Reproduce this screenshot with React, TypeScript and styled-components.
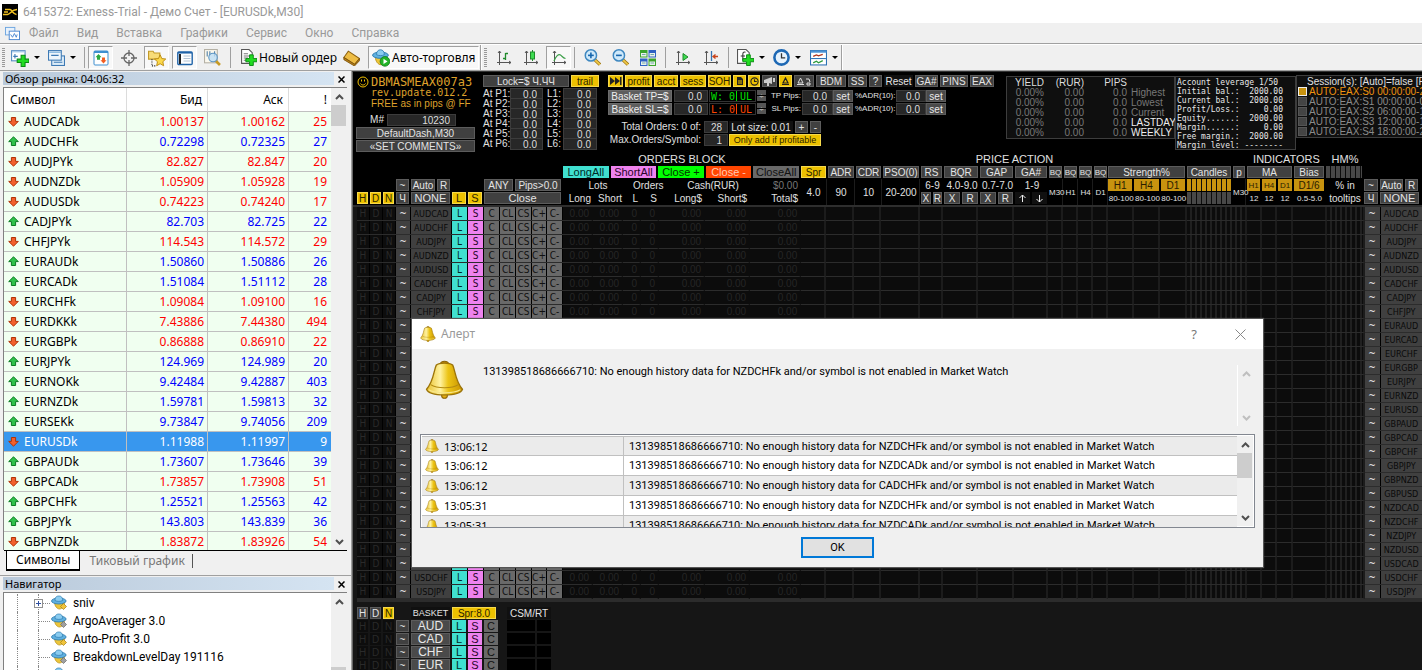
import React from "react";
import styled, { createGlobalStyle, css } from "styled-components";

const SEGOE = `"Noto Sans", "Open Sans", sans-serif`;
const COMPACT = `Roboto, "Noto Sans", sans-serif`;
const TAHOMA = `"Noto Sans", "DejaVu Sans", sans-serif`;
const ARIAL = `"Liberation Sans", Arial, sans-serif`;
const MONO = `"DejaVu Sans Mono", "Liberation Mono", monospace`;

const Global = createGlobalStyle`
  *, *::before, *::after { box-sizing: border-box; }
  body { margin: 0; background: #f0f0f0; overflow: hidden; }
  button, input { font: inherit; color: inherit; margin: 0; padding: 0; border: 0; border-radius: 0; background: none; min-width: 0; }
  table { border-collapse: separate; border-spacing: 0; table-layout: fixed; }
  td, th { padding: 0; font-weight: 400; }
`;

/* ---------- window frame ---------- */
const Window = styled.div`
  display: flex; flex-direction: column; height: 100vh; overflow: hidden;
  font: 12px/16px ${SEGOE}; color: #000; background: #f0f0f0;
`;
const TitleBar = styled.header`
  display: flex; align-items: center; gap: 5px; flex: none; height: 23px; padding-left: 2px;
  background: #fff; color: #999; font-family: ${COMPACT};
`;
const MenuBar = styled.nav`
  display: flex; align-items: center; gap: 18px; flex: none; height: 21px; padding-left: 5px;
  border-bottom: 1px solid #a0a0a0; color: #999; font-family: ${COMPACT};
`;
const MenuItem = styled.button`line-height: 16px; &:first-of-type { margin-left: -9px; }`;
const ToolBar = styled.div`
  display: flex; align-items: center; flex: none; height: 27px;
  border-top: 1px solid #fff; border-bottom: 1px solid #a0a0a0;
`;
const Grip = styled.i<{ $w: number }>`
  flex: none; width: ${p => p.$w}px; height: 20px;
  &::before { content: ""; display: block; width: 3px; height: 20px; margin-left: 2px;
    background: repeating-linear-gradient(#999 0 1px, #f0f0f0 1px 2px); }
`;
const Sep = styled.i<{ $w: number }>`
  flex: none; display: flex; justify-content: center; width: ${p => p.$w}px; height: 21px;
  &::before { content: ""; width: 1px; background: #a0a0a0; }
`;
const ToolEnd = styled.i`flex: none; width: 2px; height: 25px; background: #a0a0a0; border-right: 1px solid #fff;`;
const Tool = styled.button<{ $w: number; $on?: boolean; $left?: number }>`
  display: flex; align-items: center; gap: 2px; flex: none; width: ${p => p.$w}px; height: 23px;
  justify-content: ${p => (p.$left ? "flex-start" : "center")};
  padding-left: ${p => p.$left ?? 0}px; white-space: nowrap; font-size: 12px;
  ${p => p.$on && css`background: #f8f8f8; border: 1px solid #a0a0a0; border-right-color: #fff; border-bottom-color: #fff;`}
`;
const Caret = styled.i`margin-left: 3px; border: 3px solid transparent; border-top-color: #000; border-bottom: 0;`;
const Gap = styled.i<{ $w: number }>`flex: none; width: ${p => p.$w}px;`;

const Main = styled.div`display: flex; flex: 1; min-height: 0;`;

/* ---------- left docks ---------- */
const Side = styled.aside`
  display: flex; flex-direction: column; flex: none; width: 352px; border-right: 1px solid #a0a0a0;
`;
const Dock = styled.section<{ $grow?: boolean }>`
  display: flex; flex-direction: column; padding: 1px 4px 0 3px; min-height: 0;
  ${p => (p.$grow ? css`flex: 1;` : css`flex: none; height: 505px; border-bottom: 1px solid #a0a0a0;`)}
`;
const Caption = styled.div`
  display: flex; justify-content: space-between; flex: none; height: 15px; padding-left: 2px;
  font: 11px/13px ${TAHOMA};
  background: linear-gradient(90deg, #b9c9da, #d5e4f2) left top / 331px 13px no-repeat;
`;
const CaptionClose = styled.button`width: 11px; height: 14px; display: grid; place-items: center;`;
const ListBox = styled.div<{ $h?: number }>`
  display: flex; overflow: hidden; background: #fff; border: solid #808080; border-width: 1px 0 0 1px;
  ${p => (p.$h ? css`height: ${p.$h}px;` : css`flex: 1;`)}
`;
const Bar = styled.div`
  position: relative; display: flex; flex-direction: column; justify-content: space-between; align-items: center;
  flex: none; width: 16px; padding: 6px 0 5px; background: #f0f0f0;
`;
const Thumb = styled.i<{ $top: number; $h: number }>`
  position: absolute; left: 0; right: 1px; top: ${p => p.$top}px; height: ${p => p.$h}px; background: #cdcdcd;
`;
const Quotes = styled.table`
  width: 327px; flex: none; height: max-content; background: #fff;
  th { height: 24px; padding-right: 5px; text-align: right; border-right: 1px solid #dcdcdc; border-bottom: 1px solid #c0c0c0; }
  th:first-child { text-align: left; padding-left: 6px; }
  th:last-child, td:last-child { border-right: 0; padding-right: 4px; }
`;
const Quote = styled.tr<{ $c: string; $sel?: boolean }>`
  background: ${p => (p.$sel ? "#3897ee" : "#f0fff0")};
  td { height: 20px; line-height: 19px; color: ${p => (p.$sel ? "#fff" : p.$c)}; text-align: right; padding-right: 3px;
    border-right: 1px solid #c0c0c0; border-bottom: 1px solid #c0c0c0; }
  td:first-child { color: ${p => (p.$sel ? "#fff" : "#000")}; }
`;
const Sym = styled.span`display: flex; align-items: center; gap: 5px; padding-left: 4px; height: 19px;`;
const Tabs = styled.div`
  display: flex; flex: none; height: 22px; margin: 0 0 0 1px; padding-left: 2px; border-top: 1px solid #000; font-size: 12px;
`;
const Tab = styled.button<{ $on?: boolean }>`
  height: 20px; line-height: 16px; display: flex; align-items: center; padding: 0 9px;
  ${p => (p.$on ? css`background: #fff; border: 1px solid #000; border-top: 0; border-bottom-width: 2px;` : css`color: #777;`)}
  &:last-child::after { content: ""; height: 14px; margin-left: 7px; border-right: 1px solid #555; }
`;
const Tree = styled.ul`
  flex: 1; margin: 0; padding: 1px 0 0 13px; list-style: none; overflow: hidden; height: 110px; font-family: ${COMPACT};
`;
const Node = styled.li`
  display: flex; align-items: center; height: 18px; padding-left: 20px; border-left: 1px dotted #888;
`;
const NodeName = styled.span`padding-left: 6px;`;
const Branch = styled.i`
  display: flex; align-items: center; flex: none; width: 13px; height: 18px; border-left: 1px dotted #888;
  &::after { content: ""; width: 11px; border-top: 1px dotted #888; }
`;
const Plus = styled.button`
  position: relative; flex: none; width: 9px; height: 9px; margin: 0 -4px 0 -5px; border: 1px solid #919191; background: #fff;
  display: grid; place-items: center;
`;

/* ---------- chart dashboard ---------- */
const Chart = styled.main`
  position: relative; flex: 1; min-width: 0; overflow: hidden; background: #161616; border-left: 1px solid #666; border-top: 1px solid #333;
  font: 10px/11px ${ARIAL}; color: #e0e0e0;
`;
const Head = styled.div`background: #000; border-bottom: 2px solid #2e2e2e; width: max-content; min-width: 100%;`;
const TopRow = styled.div`display: flex; height: 81px; padding-left: 3px;`;
const Stack = styled.div<{ $w: number; $top?: number; $gap?: number }>`
  flex: none; width: ${p => p.$w}px; padding-top: ${p => p.$top ?? 0}px; display: flex; flex-direction: column; gap: ${p => p.$gap ?? 0}px;
`;
const Line = styled.div<{ $top?: number; $h?: number; $left?: number }>`
  display: flex; height: ${p => p.$h ?? 13}px; margin-top: ${p => p.$top ?? 0}px; padding-left: ${p => p.$left ?? 0}px; white-space: nowrap;
`;

const tones: Record<string, string> = {
  dark: "background:#404040;color:#e4e4e4;border-color:#5c5c5c;",
  mid: "background:#5e5e5e;color:#eee;border-color:#6c6c6c;",
  gold: "background:#edc100;color:#2c2400;border-color:#f6d94c;",
  ochre: "background:#c8930f;color:#2a1d00;border-color:#c8930f;",
  cyan: "background:#40e0d0;color:#002a26;border-color:#40e0d0;",
  pink: "background:#ee82ee;color:#2a042a;border-color:#ee82ee;",
  lime: "background:#00ff00;color:#003000;border-color:#00ff00;",
  red: "background:#ff4500;color:#ffc9b0;border-color:#ff4500;",
  gray: "background:#696969;color:#111;border-color:#696969;",
  plain: "background:#101010;color:#e4e4e4;border-color:#101010;",
  pair: "background:#404040;color:#0a0a0a;border-color:#404040;",
  off: "background:#0d0d0d;color:#2a2a2a;border-color:#0d0d0d;",
  big: "background:#4a4a4a;color:#e8e8e8;border-color:#5c5c5c;",
};
const Key = styled.button<{ $w?: number; $t?: string; $fs?: number }>`
  display: inline-flex; align-items: center; justify-content: center; white-space: nowrap;
  height: 12px; line-height: 11px; border: 1px solid; margin-right: 2px;
  ${p => (p.$w ? `flex: none; width: ${p.$w - 2}px;` : "flex: 1;")}
  ${p => tones[p.$t ?? "dark"]}
  ${p => p.$fs && `font-size: ${p.$fs}px;`}
`;
const Field = styled.input<{ $w: number }>`
  flex: none; width: ${p => p.$w}px; height: 12px; line-height: 10px; padding-right: 5px; text-align: right; color: #ddd;
  background: #272727; border: 1px solid #3c3c3c;
`;
const Small = styled.label<{ $w: number }>`
  flex: none; width: ${p => p.$w}px; height: 12px; font: 8px/12px ${ARIAL}; text-align: right; padding-right: 1px;
`;
const Lbl = styled.label<{ $w: number; $r?: boolean }>`
  flex: none; width: ${p => p.$w}px; line-height: 12px; ${p => p.$r && css`text-align: right; padding-right: 3px;`}
`;
const Brand = styled.div`color: #dea12c; display: grid; grid-template-columns: 14px 1fr; height: 43px; padding-left: 1px; white-space: nowrap;`;
const BrandName = styled.div`padding-top: 5px; font: 12px/11px ${MONO};`;
const BrandRev = styled.div`font: 10px/9px ${MONO};`;
const BrandFree = styled.div`font: 10px/14px ${ARIAL};`;
const Smiley = styled.span`padding-top: 4px;`;
const Counter = styled.div<{ $c: string }>`
  display: flex; flex: none; width: 47px; height: 12px; margin: 0 1px; padding: 0 3px 0 1px; justify-content: space-between;
  border: 1px solid #333; color: ${p => p.$c}; font: 10px/11px ${MONO};
  b { font-weight: 400; border-left: 1px solid ${p => p.$c}; padding-left: 3px; }
`;
const Spin = styled.button`
  width: 9px; height: 12px; margin-right: 3px; flex: none; background: repeating-linear-gradient(#555 0 5px, #000 5px 6px);
  display: flex; align-items: center; justify-content: center; font-size: 8px;
`;
const Panel = styled.div<{ $w: number; $h: number; $top: number }>`
  flex: none; width: ${p => p.$w}px; height: ${p => p.$h}px; margin-top: ${p => p.$top}px; background: #0f0f0f; border: 1px solid #3d3d3d;
`;
const Yield = styled.table`
  width: 167px; color: #777;
  td, th { height: 10px; line-height: 10px; text-align: right; }
  th { color: #ddd; height: 11px; } th:last-child, td:last-child { text-align: left; padding-left: 4px; }
`;
const Bright = styled.span`color: #eee;`;
const Account = styled.pre`margin: 0; padding: 1px 0 0 1px; font: 8px/9px ${MONO}; color: #e8e8e8;`;
const Session = styled.label<{ $on?: boolean }>`
  display: flex; gap: 2px; height: 10px; line-height: 10px; padding-left: 1px; white-space: nowrap; color: ${p => (p.$on ? "#f0940f" : "#8a8a8a")};
  input { appearance: none; width: 9px; height: 9px; margin: 0; background: ${p => (p.$on ? "#c8930f" : "#444")};
    border: 1px solid ${p => (p.$on ? "#eee" : "#555")}; }
`;
const BottomRow = styled.div`display: flex; align-items: flex-end; height: 52px; padding-left: 4px;`;
const Col = styled.div<{ $w: number }>`flex: none; width: ${p => p.$w}px; display: flex; flex-direction: column;`;
const Cap = styled.div`height: 13px; font-size: 11px; line-height: 13px; text-align: center; white-space: nowrap;`;
const Two = styled.div<{ $fs?: number }>`
  height: 26px; display: grid; place-items: center; margin-right: 1px; border-right: 1px solid #1c1c1c; ${p => p.$fs && `font-size: ${p.$fs}px;`}
`;
const Txt = styled.span<{ $w?: number; $a?: string; $s?: boolean; $dim?: boolean }>`
  ${p => (p.$w ? `flex: none; width: ${p.$w}px;` : "flex: 1;")} line-height: 13px; text-align: ${p => p.$a ?? "center"};
  ${p => p.$a === "right" && "padding-right: 3px;"} ${p => p.$s && css`font-size: 8px;`} ${p => p.$dim && "color: #777;"}
`;
const Stripes = styled.div<{ $c: string }>`
  flex: 1; height: 12px; margin-right: 2px; background: repeating-linear-gradient(90deg, ${p => p.$c} 0 4px, #0c0c0c 4px 5px);
`;

const Grid = styled.table`
  width: 1066px; margin-left: 4px; font: 10px/12px "DejaVu Sans Condensed", "DejaVu Sans", sans-serif; color: #262626;
  td { height: 14px; background: #0c0c0c; border-right: 2px solid #1c1c1c; border-bottom: 1px solid #2c2c2c; overflow: hidden; white-space: nowrap; text-align: right; padding-right: 2px; }
  td.key { padding: 0; border-right: 0; background: #000; }
  td.num { border-right-color: #0c0c0c; font: 10px/12px ${ARIAL}; }
  td.bars { background: repeating-linear-gradient(90deg, #0c0c0c 0 3px, #202020 3px 5px); }
`;
const Cell = styled.button<{ $t: string }>`
  display: flex; align-items: center; justify-content: center; width: calc(100% - 1px); height: 13px; line-height: 12px; overflow: hidden;
  ${p => tones[p.$t]} ${p => p.$t === "pair" && "font-size: 9px;"}
`;
const GridEnd = styled.div`height: 3px; background: #2c2c2c; margin-left: 4px; min-width: 100%;`;
const Basket = styled.div`padding: 5px 0 0 4px; display: flex; flex-direction: column;`;
const BRow = styled.div`display: flex; height: 13px; white-space: nowrap;`;
const Black = styled.i<{ $w: number }>`flex: none; width: ${p => p.$w - 2}px; height: 11px; margin-right: 2px; background: #000;`;

/* ---------- alert dialog ---------- */
const Dialog = styled.div`
  position: absolute; left: 59px; top: 247px; width: 851px; height: 248px; background: #f0f0f0; color: #000;
  display: flex; flex-direction: column; font: 11px/14px ${COMPACT}; box-shadow: 0 0 1px 1px #555;
`;
const DTitle = styled.div`
  display: flex; align-items: center; flex: none; height: 30px; padding-left: 8px; background: #fff; color: #999; font: 12px/16px ${SEGOE};
`;
const DName = styled.span`flex: 1; padding-left: 5px;`;
const DBtn = styled.button`width: 46px; height: 30px; display: grid; place-items: center; font-size: 13px; color: #777;`;
const DTop = styled.div`display: flex; flex: none; height: 85px; padding: 11px 8px 0 13px;`;
const Message = styled.p`flex: 1; margin: 0; padding: 5px 0 0 19px;`;
const DScroll = styled.div`
  display: flex; flex-direction: column; align-items: center; justify-content: space-between; width: 18px; height: 61px; margin-top: 5px; padding: 6px 0 5px; border-left: 1px solid #fff;
`;
const AlertList = styled.div`
  display: flex; flex: none; height: 94px; margin: 0 8px; padding: 1px; border: 1px solid #828790; background: #fff; overflow: hidden;
`;
const Alerts = styled.table`
  flex: 1; height: max-content; 
  td { height: 20px; line-height: 17px; border-bottom: 1px solid #c0c0c0; }
  tr:nth-child(odd) td { background: #ebebeb; }
  td:first-child { width: 202px; border-right: 1px solid #c0c0c0; }
  td:last-child { padding-left: 5px; }
  tr:first-child td { border-top: 1px solid #c0c0c0; }
`;
const Time = styled.span`display: flex; align-items: center; gap: 5px; padding-left: 3px; height: 18px; font-family: ${TAHOMA};`;
const Ok = styled.button`align-self: center; width: 73px; height: 21px; margin: 9px 0 0; background: #e1e1e1; border: 2px solid #0078d7;`;

/* ---------- drawings ---------- */
const Draw = styled.svg`flex: none;`;
const Svg = ({ s = 16, children, h, vb }: any) => (
  <Draw width={s} height={h ?? s} viewBox={vb ?? "0 0 16 16"} fill="none">{children}</Draw>
);
const Chev = ({ up, c = "#505050" }: { up?: boolean; c?: string }) => (
  <Svg s={9} h={6} vb="0 0 9 6"><path d={up ? "M1 5L4.500 1.500L8 5" : "M1 1L4.500 4.500L8 1"} stroke={c} strokeWidth="2" /></Svg>
);
const Arrow = ({ up }: { up?: boolean }) => (
  <Svg s={11} vb="0 0 11 11">
    {up
      ? <path d="M5.500 .8L10.300 5.600H7.600V9.500H3.400V5.600H.7z" fill="#2fc24a" stroke="#0b7a22" />
      : <path d="M5.500 10.200L10.300 5.400H7.600V1.500H3.400V5.400H.7z" fill="#f2602c" stroke="#b03205" />}
  </Svg>
);
const PlusG = () => <path d="M9 5.500h3.500v3.500h3.500v3h-3.500v3.500H9V12H5.500V9H9z" fill="#22dc22" stroke="#0a8a14" strokeWidth=".9" />;
const Axes = () => (
  <><path d="M3.500 1v14M1 12.500h14" stroke="#555" /><path d="M2 3l1.500-2L5 3M13 11l2 1.500-2 1.500" stroke="#555" /></>
);
const Hat = ({ gold = true }: { gold?: boolean }) => (
  <Svg>
    <path d="M3.500 7c0 4 2.500 7 5 7s5-3 5-7z" fill="#ecc53a" stroke="#b48c14" strokeWidth=".7" />
    <ellipse cx="7.800" cy="6" rx="7.300" ry="3" fill="#5fb0e0" stroke="#2a79ad" strokeWidth=".8" />
    <path d="M4 5.500C4 2 5.600 1 7.800 1s3.800 1 3.800 4.500c-2 1.200-5.600 1.200-7.600 0z" fill="#8accf0" stroke="#2a79ad" strokeWidth=".7" />
    <path d="M12.500 8.500l3 3-3 3-3-3z" fill={gold ? "#f0c43c" : "#a0a0a0"} stroke={gold ? "#a67c10" : "#686868"} strokeWidth=".7" />
  </Svg>
);
const Bell = ({ s }: { s: number }) => (
  <Svg s={s} vb="0 0 38 38">
    <defs>
      <linearGradient id="bell" x1="0" x2="1"><stop offset="0" stopColor="#e8c02c" /><stop offset=".38" stopColor="#fff2a0" /><stop offset=".6" stopColor="#ecc416" /><stop offset="1" stopColor="#c89200" /></linearGradient>
    </defs>
    <circle cx="19" cy="34.500" r="2.800" fill="#e3ad10" stroke="#8a6208" />
    <path d="M15 3.500c1-3 7-3 8 0z" fill="#b98508" stroke="#8a6208" />
    <path d="M11 5C14 2.500 24 2.500 27 5c2.500 5 2.500 16 9.500 23.500C35 32.500 28 34 19 34S3 32.500 1.500 28.500C8.500 21 8.500 10 11 5z" fill="url(#bell)" stroke="#9c7408" strokeWidth="1.300" />
    <path d="M5.500 24c6 4 21 4 27 0" stroke="#b48b10" />
    <path d="M3.500 29c7 4 24 4 31 0" stroke="#f8e68a" />
  </Svg>
);
const Lens = ({ plus }: { plus?: boolean }) => (
  <Svg s={17}>
    <path d="M10 10l5 4.700" stroke="#9a7410" strokeWidth="3.200" /><path d="M10 10l5 4.700" stroke="#f0c848" strokeWidth="1.800" />
    <circle cx="6.500" cy="6" r="5.300" fill="#cfe9fa" stroke="#3f88c0" strokeWidth="1.400" />
    <path d="M3.800 6h5.400" stroke="#1767ae" strokeWidth="1.500" />
    {plus && <path d="M6.500 3.300v5.400" stroke="#1767ae" strokeWidth="1.500" />}
  </Svg>
);

/* ---------- data ---------- */
const quotes: [string, string, string, number, boolean][] = [
  ["AUDCADk", "1.00137", "1.00162", 25, false], ["AUDCHFk", "0.72298", "0.72325", 27, true],
  ["AUDJPYk", "82.827", "82.847", 20, false], ["AUDNZDk", "1.05909", "1.05928", 19, false],
  ["AUDUSDk", "0.74223", "0.74240", 17, false], ["CADJPYk", "82.703", "82.725", 22, true],
  ["CHFJPYk", "114.543", "114.572", 29, false], ["EURAUDk", "1.50860", "1.50886", 26, true],
  ["EURCADk", "1.51084", "1.51112", 28, true], ["EURCHFk", "1.09084", "1.09100", 16, false],
  ["EURDKKk", "7.43886", "7.44380", 494, false], ["EURGBPk", "0.86888", "0.86910", 22, false],
  ["EURJPYk", "124.969", "124.989", 20, true], ["EURNOKk", "9.42484", "9.42887", 403, true],
  ["EURNZDk", "1.59781", "1.59813", 32, true], ["EURSEKk", "9.73847", "9.74056", 209, true],
  ["EURUSDk", "1.11988", "1.11997", 9, false], ["GBPAUDk", "1.73607", "1.73646", 39, true],
  ["GBPCADk", "1.73857", "1.73908", 51, false], ["GBPCHFk", "1.25521", "1.25563", 42, true],
  ["GBPJPYk", "143.803", "143.839", 36, true], ["GBPNZDk", "1.83872", "1.83926", 54, false],
];
const pairs = "AUDCAD AUDCHF AUDJPY AUDNZD AUDUSD CADCHF CADJPY CHFJPY EURAUD EURCAD EURCHF EURGBP EURJPY EURNZD EURUSD GBPAUD GBPCAD GBPCHF GBPJPY GBPNZD GBPUSD NZDCAD NZDCHF NZDJPY NZDUSD USDCAD USDCHF USDJPY".split(" ");
const cols = [13, 13, 13, 15, 41, 16, 16, 16, 16, 16, 15, 16, 30, 30, 18, 18, 46, 45, 51, 25, 28, 27, 39, 23, 35, 36, 34, 15, 15, 15, 15, 26, 26, 27, 60, 15, 15, 16, 33, 38, 16, 42];
const alerts = [["13:06:12", "NZDCHFk"], ["13:06:12", "NZDCADk"], ["13:06:12", "CADCHFk"], ["13:05:31", "NZDCHFk"], ["13:05:31", "NZDCADk"]];
const alertText = (s: string) => `131398518686666710: No enough history data for ${s} and/or symbol is not enabled in Market Watch`;
const account = `Account leverage 1/50
Initial bal.:  2000.00
Current bal.:  2000.00
Profit/Loss.:     0.00
Equity......:  2000.00
Margin......:     0.00
Free margin.:  2000.00
Margin level: --------`;

function TopTools() {
  return (
    <ToolBar role="toolbar">
      <Grip $w={8} />
      <Tool $w={34} $left={3} aria-label="New chart"><Svg s={18}><rect x=".5" y="1.500" width="12" height="9" fill="#fff" stroke="#5a8fc4" /><path d="M1 2.500h11" stroke="#9cc3e8" /><path d="M3.500 4.500v4M2 6.500h4" stroke="#3d79b4" /><PlusG /></Svg><Caret /></Tool>
      <Tool $w={38} $left={6} aria-label="Profiles"><Svg s={17}><rect x="3.500" y="6.500" width="12" height="9" fill="#dcecf8" stroke="#3d79b4" /><rect x=".5" y="1.500" width="12" height="9" fill="#eef6fc" stroke="#3d79b4" /><path d="M1 3h11" stroke="#6fa8d8" /><path d="M3 6h7M5.500 12.500h8" stroke="#3d79b4" /></Svg><Caret /></Tool>
      <Sep $w={8} />
      <Tool $w={25} $on aria-label="Market watch"><Svg><rect x="1" y="1" width="14" height="14" rx="1" fill="#fff" stroke="#3f8fd0" /><path d="M1 2h14" stroke="#3f8fd0" strokeWidth="2" /><path d="M5.500 4l3 3.200H7v2.600H4V7.200H2.500z" fill="#2ba83e" /><path d="M10.500 13.500l3-3.200H12V7.500H9v2.800H7.500z" fill="#f25e22" /></Svg></Tool>
      <Tool $w={31} aria-label="Data window"><Svg><circle cx="8" cy="8" r="5" stroke="#666" strokeWidth="1.300" /><path d="M8 0v6M8 10v6M0 8h6M10 8h6" stroke="#666" strokeWidth="1.300" /></Svg></Tool>
      <Tool $w={25} $on aria-label="Navigator"><Svg s={18}><path d="M.5 2h4l1 1.500h5V9H.5z" fill="#f8dc78" stroke="#c29a28" /><path d="M3.500 9v6h4" stroke="#222" strokeDasharray="1 1" /><path d="M10.800 5.200l1.500 3.300 3.500.4-2.600 2.400.7 3.600-3.100-1.800-3.100 1.800.7-3.600-2.600-2.400 3.500-.4z" fill="#fbd84a" stroke="#b8860b" strokeWidth=".8" /></Svg></Tool>
      <Gap $w={3} />
      <Tool $w={25} $on aria-label="Terminal"><Svg><rect x=".8" y="2" width="14.400" height="12.500" rx="1" fill="#fff" stroke="#1f63a8" strokeWidth="1.400" /><path d="M1 2.800h14" stroke="#1f63a8" strokeWidth="1.500" /><path d="M3 4v10" stroke="#222" strokeWidth="2" /><path d="M6.500 6h7M6.500 8.500h7M6.500 11h7" stroke="#b4c4d4" /></Svg></Tool>
      <Tool $w={30} aria-label="Strategy tester"><Svg s={17}><rect x=".5" y=".5" width="12" height="12.500" fill="#fbf8ee" stroke="#b4b0a4" /><path d="M3 2v5M5.500 2v4M10 2v5" stroke="#4c7ca4" /><path d="M11 11l4 4" stroke="#c79a24" strokeWidth="2.500" /><circle cx="8.500" cy="8" r="4" fill="#bcdcf4cc" stroke="#5a94c4" /></Svg></Tool>
      <Sep $w={7} />
      <Gap $w={2} />
      <Tool $w={99} $left={4}><Svg s={17}><path d="M1.500 .5h7l3 3v10h-10z" fill="#fff" stroke="#555" /><path d="M3.500 4.500h4M3.500 6.500h6M3.500 8.500h4M3.500 10.500h3" stroke="#777" /><PlusG /></Svg>Новый ордер</Tool>
      <Tool $w={33} aria-label="MetaEditor"><Svg s={17}><path d="M5 2l10.500 7-4.500 5.500L.8 8z" fill="#eebd45" stroke="#8c6110" /><path d="M.8 8v2l10 6 4.700-5V9l-4.500 5.500z" fill="#bd8218" stroke="#7a520a" strokeWidth=".8" /></Svg></Tool>
      <Tool $w={111} $on $left={3}><Svg s={18}><path d="M3 7c0 4 2.500 7 5 7s5-3 5-7z" fill="#ecc53a" stroke="#b48c14" strokeWidth=".7" /><ellipse cx="7.500" cy="5.500" rx="7" ry="2.800" fill="#5fb0e0" stroke="#2a79ad" strokeWidth=".8" /><path d="M4 5C4 2 5.600 .7 7.500 .7S11 2 11 5c-2 1.200-5 1.200-7 0z" fill="#8accf0" stroke="#2a79ad" strokeWidth=".7" /><circle cx="11.500" cy="11" r="4.300" fill="#22b428" stroke="#0a7a14" strokeWidth=".7" /><path d="M10.200 8.700v4.600l3.600-2.300z" fill="#fff" /></Svg>Авто-торговля</Tool>
      <Gap $w={1} /><ToolEnd /><Grip $w={9} />
      <Tool $w={26} aria-label="Bar chart"><Svg><Axes /><path d="M9.500 3v7M7 8.500h2.500M9.500 3.500h2.500" stroke="#1f8a2a" strokeWidth="1.300" /></Svg></Tool>
      <Tool $w={28} aria-label="Candlesticks"><Svg><Axes /><path d="M9.500 0v11" stroke="#1f8a2a" /><rect x="7.500" y="2" width="4" height="7" fill="#3ddc50" stroke="#1f8a2a" /></Svg></Tool>
      <Gap $w={1} />
      <Tool $w={25} $on aria-label="Line chart"><Svg><Axes /><path d="M3 11C5 6 7.500 3.500 9.500 5s2.500 3 5 3.500" stroke="#3a9e46" strokeWidth="1.200" /></Svg></Tool>
      <Sep $w={7} />
      <Tool $w={28} aria-label="Zoom in"><Lens plus /></Tool>
      <Tool $w={28} aria-label="Zoom out"><Lens /></Tool>
      <Tool $w={28} aria-label="Tile windows"><Svg><path d="M0 0h7.500v7.500H0zM8.500 8.500H16V16H8.500z" fill="#3ba52c" /><path d="M8.500 0H16v7.500H8.500zM0 8.500h7.500V16H0z" fill="#2e62c4" /><path d="M1 3h5.500v3.500H1zM9.500 3H15v3.500H9.500zM1 11.500h5.500V15H1zM9.500 11.500H15V15H9.500z" fill="#e8f2ea" /><path d="M2 4.500h3.500M10.500 4.500H14M2 13h3.500M10.500 13H14" stroke="#7aa" /></Svg></Tool>
      <Sep $w={7} />
      <Tool $w={28} aria-label="Auto scroll"><Svg><Axes /><path d="M8 3.500v7l5-3.500z" fill="#3ddc50" stroke="#1f8a2a" /></Svg></Tool>
      <Tool $w={28} aria-label="Chart shift"><Svg><Axes /><path d="M8.500 1v10" stroke="#3572b0" strokeWidth="1.300" /><path d="M15 6.500h-5M12.500 4.500l-2.500 2 2.500 2" stroke="#c8441c" strokeWidth="1.300" /></Svg></Tool>
      <Sep $w={6} /><Gap $w={2} />
      <Tool $w={36} $left={4} aria-label="Indicators"><Svg s={17}><path d="M.5 .5h8l3 3v10H.5z" fill="#fff" stroke="#555" /><path d="M8 3C6 2.500 5.500 3.500 5.500 5v6M3.500 6.500h4" stroke="#333" /><PlusG /></Svg><Caret /></Tool>
      <Tool $w={37} $left={4} aria-label="Periods"><Svg s={17}><circle cx="8" cy="8" r="6.700" fill="#e6f2fc" stroke="#1d68b4" strokeWidth="2.400" /><path d="M8 4v4.300h3.500" stroke="#333" strokeWidth="1.200" /></Svg><Caret /></Tool>
      <Tool $w={35} $left={4} aria-label="Templates"><Svg s={17}><rect x=".5" y="1.500" width="15" height="13.500" fill="#fff" stroke="#2c70b4" /><path d="M.5 2.500h15" stroke="#4a92d4" strokeWidth="2" /><path d="M1 9h14" stroke="#2c70b4" /><path d="M3 7l3-1.500 2 1 4-1.500" stroke="#b0341c" strokeWidth="1.200" /><path d="M3 13l3-1.500 2 1.500 4-2" stroke="#2c9a3c" strokeWidth="1.200" /></Svg><Caret /></Tool>
      <ToolEnd />
    </ToolBar>
  );
}

const PipRow = ({ n, i, top }: { n: string; i: number; top?: number }) => (
  <Line $top={top}>
    <Key $w={66} $t="mid">Basket {n}=$</Key>
    <Field $w={34} defaultValue="0.0" aria-label={`Basket ${n}`} />
    <Counter $c={i ? "#ff4500" : "#00e000"}>{i ? "L: 0" : "W: 0"}<b>UL</b></Counter>
    <Spin aria-label="step">÷</Spin>
    <Small $w={33} htmlFor={`pips${i}`}>{n} Pips:</Small>
    <Field $w={31} id={`pips${i}`} defaultValue="0.0" />
    <Key $w={22} $t="big">set</Key>
    <Small $w={41} htmlFor={`adr${i}`}>%ADR(10):</Small>
    <Field $w={30} id={`adr${i}`} defaultValue="0.0" />
    <Key $w={22} $t="big">set</Key>
  </Line>
);

function Top() {
  return (
    <TopRow>
      <Stack $w={127}>
        <Brand>
          <Smiley><Svg s={12} vb="0 0 12 12"><g stroke="#f0c000"><circle cx="6" cy="6" r="5" /><path d="M3.500 7.500c1 2 4 2 5 0M4.500 3.500v2M7.500 3.500v2" /></g></Svg></Smiley>
          <div><BrandName>DBMASMEAX007a3</BrandName><BrandRev>rev.update.012.2</BrandRev><BrandFree>FREE as in pips @ FF</BrandFree></div>
        </Brand>
        <Line><Lbl $w={31} $r htmlFor="magic">M#</Lbl><Field $w={69} id="magic" defaultValue="10230" /></Line>
        <Line><Key $w={121}>DefaultDash,M30</Key></Line>
        <Line><Key $w={121}>«SET COMMENTS»</Key></Line>
      </Stack>
      <Stack $w={125} $top={3}>
        <Line><Key $w={88}>Lock=$ Ч.ЧЧ</Key><Key $w={30} $t="gold">trail</Key></Line>
        {[1, 2, 3, 4, 5, 6].map(n => (
          <Line key={n} $h={10}>
            <Lbl $w={27} htmlFor={`p${n}`}>At P{n}:</Lbl><Field $w={33} id={`p${n}`} defaultValue="0.0" />
            <Gap $w={4} /><Lbl $w={16} htmlFor={`l${n}`}>L{n}:</Lbl><Field $w={34} id={`l${n}`} defaultValue="0.0" />
          </Line>
        ))}
      </Stack>
      <Stack $w={398} $top={3}>
        <Line>
          <Key $w={17} $t="gold" aria-label="forward"><Svg s={13} h={8} vb="0 0 13 8"><path d="M1 0l5 4-5 4zM6 0l5 4-5 4zM11 0h1.500v8H11z" fill="#222" /></Svg></Key>
          <Key $w={29} $t="gold">profit</Key><Key $w={26} $t="gold">acct</Key><Key $w={28} $t="gold">sess</Key><Key $w={25} $t="gold">SOH</Key>
          <Key $w={15} $t="gold" aria-label="report"><Svg s={8} vb="0 0 8 8"><path d="M1 0h4l2 2v6H1z" fill="#222" /><path d="M2 4h4M2 6h4" stroke="#edc100" /></Svg></Key>
          <Key $w={14} $t="gold" aria-label="clock"><Svg s={9} vb="0 0 8 8"><circle cx="4" cy="4" r="3.200" stroke="#222" /><path d="M4 2v2h2" stroke="#222" /></Svg></Key>
          <Key $w={17} aria-label="voice"><Svg s={11} h={9} vb="0 0 11 9"><path d="M0 3l8-3v7L5 6v3H3V6H0zM9 1h2v4H9z" fill="#ccc" /></Svg></Key>
          <Key $w={15} $t="gold" aria-label="bell"><Svg s={9} vb="0 0 9 9"><path d="M4.500 1L7 6H2zM1 7.500h7" stroke="#222" strokeWidth="1.200" /></Svg></Key>
          <Key $w={22} aria-label="bells"><Svg s={14} h={9} vb="0 0 14 9"><path d="M3.500 1L6 6H1zM0 7.500h7M9 2h3l1 3M10 6h3v2h-3z" stroke="#ddd" /></Svg></Key>
          <Key $w={32}>BDM</Key><Key $w={21}>SS</Key><Key $w={15}>?</Key><Key $w={31} $t="plain">Reset</Key><Key $w={25}>GA#</Key><Key $w={30}>PINS</Key><Key $w={26}>EAX</Key>
        </Line>
        <PipRow n="TP" i={0} top={2} />
        <PipRow n="SL" i={1} />
        <Line $top={5}><Lbl $w={96} $r htmlFor="tot">Total Orders: 0 of:</Lbl><Field $w={24} id="tot" defaultValue="28" /><Gap $w={1} /><Key $w={66} $t="plain">Lot size: 0.01</Key><Key $w={15}>+</Key><Key $w={13}>-</Key></Line>
        <Line><Lbl $w={96} $r htmlFor="max">Max.Orders/Symbol:</Lbl><Field $w={24} id="max" defaultValue="1" /><Gap $w={1} /><Key $w={94} $t="gold" $fs={9}>Only add if profitable</Key></Line>
      </Stack>
      <Panel $w={169} $h={63} $top={4}>
        <Yield>
          <colgroup>{[37, 40, 43, 47].map((w, i) => <col key={i} width={w} />)}</colgroup>
          <thead><tr><th>YIELD</th><th>(RUR)</th><th>PIPS</th><th /></tr></thead>
          <tbody>{["Highest", "Lowest", "Current", "LASTDAY", "WEEKLY"].map((t, i) => (
            <tr key={t}><td>0.00%</td><td>0.00</td><td>0.0</td><td>{i > 2 ? <Bright>{t}</Bright> : t}</td></tr>))}
          </tbody>
        </Yield>
      </Panel>
      <Panel $w={121} $h={74} $top={4}><Account>{account}</Account></Panel>
      <Panel $w={260} $h={63} $top={3}>
        <Line $h={11} $left={10}>Session(s): [Auto]=false [R]</Line>
        {["00:00:00-23:59:59", "00:00:00-05:59:59", "06:00:00-11:59:59", "12:00:00-17:59:59", "18:00:00-23:59:59"].map((t, i) => (
          <Session key={i} $on={!i}><input type="checkbox" defaultChecked={!i} />AUTO:EAX:S{i} {t}</Session>))}
      </Panel>
    </TopRow>
  );
}

const Simple = ({ w, t, v, gold }: { w: number; t: string; v: string; gold?: boolean }) => (
  <Col $w={w}><Line><Key $t={gold ? "gold" : "dark"}>{t}</Key></Line><Two>{v}</Two></Col>
);
const Ranged = ({ w, t, v }: { w: number; t: string; v: string }) => (
  <Col $w={w}><Line><Key>{t}</Key></Line><Line><Txt>{v}</Txt></Line><Line><Key>X</Key><Key>R</Key></Line></Col>
);

function Bottom() {
  return (
    <BottomRow>
      <Line>{["H", "D", "N"].map(k => <Key key={k} $w={13} $t="gold">{k}</Key>)}</Line>
      <Col $w={56}><Line><Key $w={15}>~</Key><Key $w={26}>Auto</Key><Key $w={15}>R</Key></Line><Line><Key $w={15}>Ч</Key><Key $w={41} $fs={11}>NONE</Key></Line></Col>
      <Line><Key $w={16} $t="gold" $fs={11}>L</Key><Key $w={16} $t="gold" $fs={11}>S</Key></Line>
      <Col $w={79}><Line><Key $w={31}>ANY</Key><Key $w={48}>Pips&gt;0.0</Key></Line><Line><Key $fs={11}>Close</Key></Line></Col>
      <Col $w={238}>
        <Cap>ORDERS BLOCK</Cap>
        <Line>{[["cyan", "LongAll"], ["pink", "ShortAll"], ["lime", "Close +"], ["red", "Close -"], ["gray", "CloseAll"]].map(([t, l]) => <Key key={l} $t={t} $fs={11}>{l}</Key>)}</Line>
        <Line><Txt $w={70}>Lots</Txt><Txt $w={24}>Orders</Txt><Txt $w={112}>Cash(RUR)</Txt><Txt $a="right" $dim>$0.00</Txt></Line>
        <Line><Txt $w={31} $a="right">Long</Txt><Txt $w={31} $a="right">Short</Txt><Txt $w={16} $a="right">L</Txt><Txt $w={19} $a="right">S</Txt><Txt $w={45} $a="right">Long$</Txt><Txt $w={45} $a="right">Short$</Txt><Txt $a="right">Total$</Txt></Line>
      </Col>
      <Simple w={27} t="Spr" v="4.0" gold /><Simple w={28} t="ADR" v="90" /><Simple w={27} t="CDR" v="10" /><Simple w={38} t="PSO(0)" v="20-200" />
      <Col $w={187}>
        <Cap>PRICE ACTION</Cap>
        <Line $h={39}>
          <Ranged w={23} t="RS" v="6-9" /><Ranged w={36} t="BQR" v="4.0-9.0" /><Ranged w={35} t="GAP" v="0.7-7.0" />
          <Col $w={34}><Line><Key>GA#</Key></Line><Line><Txt>1-9</Txt></Line><Line><Key $t="plain" aria-label="up"><Svg s={9} vb="0 0 9 9"><path d="M4.500 8V1M1.500 4l3-3 3 3" stroke="#eee" /></Svg></Key><Key $t="plain" aria-label="down"><Svg s={9} vb="0 0 9 9"><path d="M4.500 1v7M1.500 5l3 3 3-3" stroke="#eee" /></Svg></Key></Line></Col>
          {["M30", "H1", "H4", "D1"].map(t => <Col $w={15} key={t}><Line><Key $fs={8}>BQ</Key></Line><Two $fs={8}>{t}</Two></Col>)}
        </Line>
      </Col>
      <Col $w={79}><Line><Key>Strength%</Key></Line><Line><Key $t="ochre">H1</Key><Key $t="ochre">H4</Key><Key $t="ochre">D1</Key></Line><Line>{[1, 2, 3].map(i => <Txt $s key={i}>80-100</Txt>)}</Line></Col>
      <Col $w={46}><Line><Key>Candles</Key></Line><Line><Stripes $c="#c8930f" /></Line><Line><Stripes $c="#484848" /></Line></Col>
      <Col $w={14}><Line><Key>p</Key></Line><Two $fs={8}>M30</Two></Col>
      <Col $w={79}>
        <Cap>INDICATORS</Cap>
        <Line><Key $w={47}>MA</Key><Key>Bias</Key></Line>
        <Line>{["H1", "H4", "D1"].map((t, i) => <Key key={t} $w={i ? 16 : 15} $t="ochre" $fs={8}>{t}</Key>)}<Key $t="ochre">D1/6</Key></Line>
        <Line><Txt $s $w={14}>12</Txt><Txt $s $w={16}>12</Txt><Txt $s $w={16}>12</Txt><Txt $s>0.5-5.0</Txt></Line>
      </Col>
      <Col $w={38}><Cap>HM%</Cap><Line><Stripes $c="#484848" /></Line><Line><Txt>% in</Txt></Line><Line><Txt>tooltips</Txt></Line></Col>
      <Col $w={56}><Line><Key $w={16}>~</Key><Key $w={25}>Auto</Key><Key $w={15}>R</Key></Line><Line><Key $w={16}>Ч</Key><Key $w={41} $fs={11}>NONE</Key></Line></Col>
    </BottomRow>
  );
}

function PairGrid() {
  const k = (t: string, label: string) => <td className="key"><Cell $t={t}>{label}</Cell></td>;
  return (
    <Grid>
      <colgroup>{cols.map((w, i) => <col key={i} width={w} />)}</colgroup>
      <tbody>
        {pairs.map(p => (
          <tr key={p}>
            {k("off", "H")}{k("off", "D")}{k("off", "N")}{k("dark", "~")}{k("pair", p)}{k("cyan", "L")}{k("pink", "S")}
            {k("gray", "C")}{k("gray", "CL")}{k("gray", "CS")}{k("gray", "C+")}{k("gray", "C-")}
            {["0.00", "0.00", "0", "0", "0.00", "0.00", "0.00"].map((v, i) => <td className="num" key={i}>{v}</td>)}
            {cols.slice(19, 40).map((_, i) => <td key={i} className={i === 15 || i === 20 ? "bars" : undefined} />)}
            {k("dark", "~")}{k("pair", p)}
          </tr>
        ))}
      </tbody>
    </Grid>
  );
}

function AlertDialog() {
  return (
    <Dialog role="dialog" aria-label="Алерт">
      <DTitle><Bell s={16} /><DName>Алерт</DName><DBtn aria-label="Help">?</DBtn>
        <DBtn aria-label="Close"><Svg s={11} vb="0 0 11 11"><path d="M.5 .5l10 10M10.500 .5l-10 10" stroke="#888" /></Svg></DBtn></DTitle>
      <DTop><Bell s={39} /><Message>{alertText("NZDCHFk")}</Message><DScroll><Chev up c="#bfbfbf" /><Chev c="#bfbfbf" /></DScroll></DTop>
      <AlertList>
        <Alerts><tbody>{alerts.map(([t, s], i) => <tr key={i}><td><Time><Bell s={14} />{t}</Time></td><td>{alertText(s)}</td></tr>)}</tbody></Alerts>
        <Bar><Chev up /><Thumb $top={17} $h={25} /><Chev /></Bar>
      </AlertList>
      <Ok>OK</Ok>
    </Dialog>
  );
}

const CloseX = () => <CaptionClose aria-label="Close"><Svg s={7} vb="0 0 7 7"><path d="M.5 .5l6 6M6.500 .5l-6 6" stroke="#000" strokeWidth="1.500" /></Svg></CaptionClose>;

export default function App() {
  return (
    <Window>
      <Global />
      <TitleBar>
        <Svg><rect width="16" height="16" fill="#000" /><path d="M1 10.500h4.500c3 0 4-5 9.500-5M2 8h4M3 5.500h5c2 0 3 5 6.500 5" stroke="#f0c020" strokeWidth="1.400" /></Svg>
        6415372: Exness-Trial - Демо Счет - [EURUSDk,M30]
      </TitleBar>
      <MenuBar>
        <Svg s={15}><rect x=".5" y="1.500" width="10" height="8" fill="#e8f2fc" stroke="#6ca4e0" /><rect x="4.500" y="5.500" width="11" height="9" fill="#fff" stroke="#4a86d0" /><path d="M6 9l2 3 2-4 2 4 1-3" stroke="#4a86d0" /></Svg>
        {["Файл", "Вид", "Вставка", "Графики", "Сервис", "Окно", "Справка"].map(m => <MenuItem key={m}>{m}</MenuItem>)}
      </MenuBar>
      <TopTools />
      <Main>
        <Side>
          <Dock>
            <Caption>Обзор рынка: 04:06:32<CloseX /></Caption>
            <ListBox $h={463}>
              <Quotes>
                <colgroup><col width={123} /><col width={81} /><col width={81} /><col /></colgroup>
                <thead><tr><th>Символ</th><th>Бид</th><th>Аск</th><th>!</th></tr></thead>
                <tbody>{quotes.map(([s, b, a, n, up]) => (
                  <Quote key={s} $c={up ? "#0000ff" : "#ff0000"} $sel={s === "EURUSDk"}>
                    <td><Sym><Arrow up={up} />{s}</Sym></td><td>{b}</td><td>{a}</td><td>{n}</td>
                  </Quote>))}
                </tbody>
              </Quotes>
              <Bar><Chev up /><Thumb $top={17} $h={21} /><Chev /></Bar>
            </ListBox>
            <Tabs><Tab $on>Символы</Tab><Tab>Тиковый график</Tab></Tabs>
          </Dock>
          <Dock $grow>
            <Caption>Навигатор<CloseX /></Caption>
            <ListBox>
              <Tree>{["sniv", "ArgoAverager 3.0", "Auto-Profit 3.0", "BreakdownLevelDay 191116", ""].map((t, i) => (
                <Node key={i}><Branch>{i === 0 && <Plus aria-label="Expand"><Svg s={5} vb="0 0 5 5"><path d="M0 2.500h5M2.500 0v5" stroke="#3050a0" /></Svg></Plus>}</Branch><Hat gold={i === 0 || i === 2} /><NodeName>{t}</NodeName></Node>))}
              </Tree>
              <Bar><Chev up /><Thumb $top={74} $h={60} /></Bar>
            </ListBox>
          </Dock>
        </Side>
        <Chart>
          <Head><Top /><Bottom /></Head>
          <PairGrid />
          <GridEnd />
          <Basket>
            <BRow>
              <Key $w={13}>H</Key><Key $w={13}>D</Key><Key $w={13} $t="gold">N</Key><Gap $w={15} /><Key $w={41} $t="plain" $fs={9}>BASKET</Key><Key $w={46} $t="gold">Spr:8.0</Key><Gap $w={9} /><Key $w={46} $t="plain">CSM/RT</Key>
            </BRow>
            {["AUD", "CAD", "CHF", "EUR"].map(c => (
              <BRow key={c}>
                {["H", "D", "N"].map(x => <Key key={x} $w={13} $t="off">{x}</Key>)}<Key $w={15}>~</Key><Key $w={41} $t="big" $fs={12}>{c}</Key>
                <Key $w={16} $t="cyan" $fs={11}>L</Key><Key $w={16} $t="pink" $fs={11}>S</Key><Key $w={16} $t="gray" $fs={11}>C</Key><Gap $w={7} /><Black $w={30} /><Black $w={16} />
              </BRow>
            ))}
          </Basket>
          <AlertDialog />
        </Chart>
      </Main>
    </Window>
  );
}
